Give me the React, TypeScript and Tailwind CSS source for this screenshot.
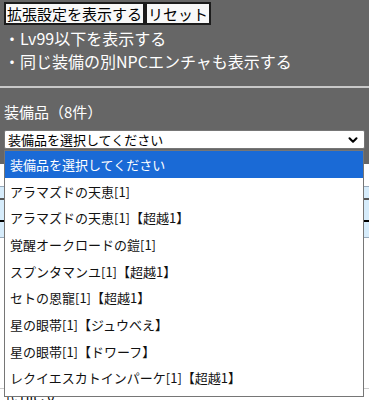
import { ChevronDown } from 'lucide-react';

const items = [
  '装備品を選択してください',
  'アラマズドの天恵[1]',
  'アラマズドの天恵[1]【超越1】',
  '覚醒オークロードの鎧[1]',
  'スプンタマンユ[1]【超越1】',
  'セトの恩寵[1]【超越1】',
  '星の眼帯[1]【ジュウべえ】',
  '星の眼帯[1]【ドワーフ】',
  'レクイエスカトインパーケ[1]【超越1】',
];

const font = { fontFamily: '"Noto Sans CJK JP", "Noto Sans", sans-serif' };

export default function App() {
  return (
    <div className="relative w-[369px] h-[400px] overflow-hidden bg-white" style={font}>
      {/* Settings panel */}
      <div className="bg-[#666666] pt-[2px] pb-[15px]">
        <div className="flex pl-[4px]">
          <button className="h-[23px] border-2 border-[#1c1c1c] bg-[#f8f8f8] px-[1px] text-[15px] leading-none text-black">
            拡張設定を表示する
          </button>
          <button className="h-[23px] border-2 border-[#1c1c1c] bg-[#f8f8f8] px-[1px] text-[15px] leading-none text-black">
            リセット
          </button>
        </div>
        <div className="mt-[2px] pl-[4px] text-[16px] leading-[23px] text-white">
          <div>・Lv99以下を表示する</div>
          <div>・同じ装備の別NPCエンチャも表示する</div>
        </div>
        <div className="mt-[13px] h-[2px] bg-[#c8c8c8]" />
        <div className="mt-[13px] pl-[4px] text-[15px] leading-[22px] text-white">装備品（8件）</div>
        <div className="mx-[4px] mt-[7px] flex h-[19px] items-center justify-between rounded-[2px] border border-[#767676] bg-white pl-[3px] pr-[4px] text-[13px] text-black">
          <span>装備品を選択してください</span>
          <ChevronDown size={14} strokeWidth={3.5} />
        </div>
      </div>

      {/* Content behind the list */}
      <div className="mt-[22px] h-[52px] border-y border-[#9ab] bg-[#d6ecfb]">
        <div className="mt-[11px] h-[2px] bg-[#555]" />
        <div className="mt-[20px] h-[2px] bg-black" />
      </div>
      <div className="mt-[150px] h-[1px] bg-[#ccc]" />
      <div className="absolute left-[4px] top-[387px] text-[13px] leading-[18px] text-black">式 Hit : 0</div>

      {/* Open select list */}
      <div className="absolute left-[4px] top-[150px] w-[360px] border border-[#767676] bg-white pb-[4px] text-[13px] text-[#111]">
        {items.map((item, index) => (
          <div
            key={index}
            className={
              index === 0
                ? 'flex h-[27px] items-center bg-[#1a6ad6] pl-[5px] text-white'
                : 'flex h-[26.7px] items-center pl-[5px]'
            }
          >
            {item}
          </div>
        ))}
      </div>
    </div>
  );
}
